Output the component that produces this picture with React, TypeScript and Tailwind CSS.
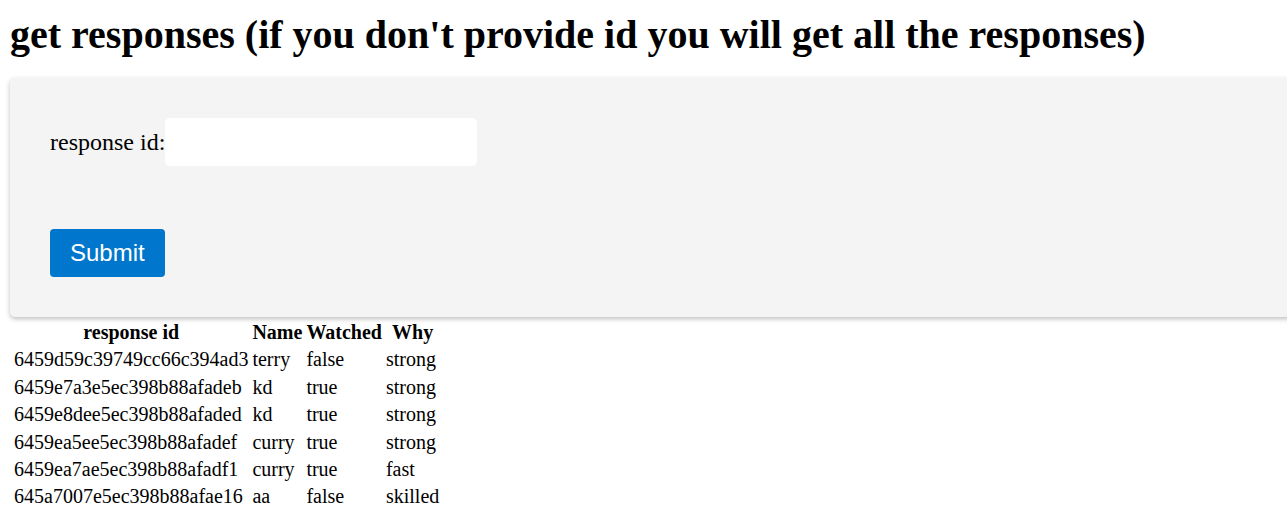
const rows = [
  { id: "6459d59c39749cc66c394ad3", name: "terry", watched: "false", why: "strong" },
  { id: "6459e7a3e5ec398b88afadeb", name: "kd", watched: "true", why: "strong" },
  { id: "6459e8dee5ec398b88afaded", name: "kd", watched: "true", why: "strong" },
  { id: "6459ea5ee5ec398b88afadef", name: "curry", watched: "true", why: "strong" },
  { id: "6459ea7ae5ec398b88afadf1", name: "curry", watched: "true", why: "fast" },
  { id: "645a7007e5ec398b88afae16", name: "aa", watched: "false", why: "skilled" },
];

export default function App() {
  return (
    <div className="min-h-[507px] overflow-hidden bg-white font-['Liberation_Serif',serif] text-black">
      <h1 className="ml-[10px] pt-[12px] text-[40px] font-bold leading-[46px]">
        get responses (if you don't provide id you will get all the responses)
      </h1>

      <form
        className="ml-[10px] mr-[-40px] mt-[20px] rounded-[5px] bg-[#f4f4f4] p-[40px] shadow-[0_2px_5px_rgba(0,0,0,0.25)]"
        onSubmit={(e) => e.preventDefault()}
      >
        <div className="flex h-[48px] items-center">
          <label htmlFor="rid" className="text-[24px]">
            response id:
          </label>
          <input
            id="rid"
            type="text"
            className="h-[48px] w-[312px] rounded-[5px] bg-white px-3 text-[20px] outline-none"
          />
        </div>
        <button
          type="submit"
          className="mt-[63px] h-[48px] rounded-[4px] bg-[#0077cc] px-[20px] font-['Liberation_Sans',Arial,sans-serif] text-[24px] text-white"
        >
          Submit
        </button>
      </form>

      <table className="ml-[11px] mt-[1px] border-separate border-spacing-[2px] text-[20px] leading-[23.4px]">
        <thead>
          <tr>
            <th className="p-[1px] font-bold">response id</th>
            <th className="p-[1px] font-bold">Name</th>
            <th className="p-[1px] font-bold">Watched</th>
            <th className="p-[1px] font-bold">Why</th>
          </tr>
        </thead>
        <tbody>
          {rows.map((r) => (
            <tr key={r.id}>
              <td className="p-[1px]">{r.id}</td>
              <td className="p-[1px]">{r.name}</td>
              <td className="p-[1px]">{r.watched}</td>
              <td className="p-[1px]">{r.why}</td>
            </tr>
          ))}
        </tbody>
      </table>
    </div>
  );
}
